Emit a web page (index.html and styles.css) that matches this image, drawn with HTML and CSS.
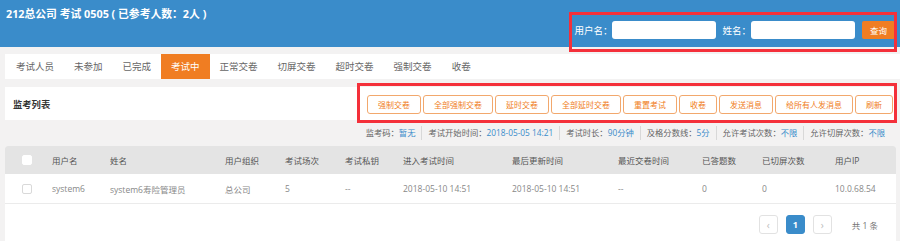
FILE: index.html
```html
<!DOCTYPE html>
<html lang="zh">
<head>
<meta charset="utf-8">
<title>监考列表</title>
<link rel="stylesheet" href="styles.css">
</head>
<body>
<div class="page">
  <header class="header">
    <div class="title">212总公司 考试 0505 ( 已参考人数：2人 )</div>
    <form class="search">
      <label class="lbl">用户名：</label>
      <input class="inp" type="text">
      <label class="lbl lbl2">姓名：</label>
      <input class="inp" type="text">
      <button type="button" class="btn-query">查询</button>
    </form>
  </header>

  <nav class="tabs">
    <span class="tab">考试人员</span>
    <span class="tab">未参加</span>
    <span class="tab">已完成</span>
    <span class="tab active">考试中</span>
    <span class="tab">正常交卷</span>
    <span class="tab">切屏交卷</span>
    <span class="tab">超时交卷</span>
    <span class="tab">强制交卷</span>
    <span class="tab">收卷</span>
  </nav>

  <section class="panel">
    <div class="panel-title">监考列表</div>
    <div class="actions">
      <button type="button" class="act">强制交卷</button>
      <button type="button" class="act">全部强制交卷</button>
      <button type="button" class="act">延时交卷</button>
      <button type="button" class="act">全部延时交卷</button>
      <button type="button" class="act">重置考试</button>
      <button type="button" class="act">收卷</button>
      <button type="button" class="act">发送消息</button>
      <button type="button" class="act">给所有人发消息</button>
      <button type="button" class="act">刷新</button>
    </div>
  </section>

  <div class="meta">
    <span class="mi">监考码：<b>暂无</b></span>
    <span class="mi">考试开始时间：<b>2018-05-05 14:21</b></span>
    <span class="mi">考试时长：<b>90分钟</b></span>
    <span class="mi">及格分数线：<b>5分</b></span>
    <span class="mi">允许考试次数：<b>不限</b></span>
    <span class="mi">允许切屏次数：<b>不限</b></span>
  </div>

  <div class="table">
    <div class="tr thead">
      <div class="td"><span class="cb"></span></div>
      <div class="td">用户名</div>
      <div class="td">姓名</div>
      <div class="td">用户组织</div>
      <div class="td">考试场次</div>
      <div class="td">考试私钥</div>
      <div class="td">进入考试时间</div>
      <div class="td">最后更新时间</div>
      <div class="td">最近交卷时间</div>
      <div class="td">已答题数</div>
      <div class="td">已切屏次数</div>
      <div class="td">用户IP</div>
    </div>
    <div class="tr trow">
      <div class="td"><span class="cb"></span></div>
      <div class="td">system6</div>
      <div class="td">system6寿险管理员</div>
      <div class="td">总公司</div>
      <div class="td">5</div>
      <div class="td">--</div>
      <div class="td">2018-05-10 14:51</div>
      <div class="td">2018-05-10 14:51</div>
      <div class="td">--</div>
      <div class="td">0</div>
      <div class="td">0</div>
      <div class="td">10.0.68.54</div>
    </div>
    <div class="pager">
      <span class="pg">&lsaquo;</span>
      <span class="pg cur">1</span>
      <span class="pg">&rsaquo;</span>
      <span class="total">共 1 条</span>
    </div>
  </div>

  <div class="mark mark-search"></div>
  <div class="mark mark-actions"></div>
</div>
</body>
</html>
```

FILE: styles.css
```css
* { box-sizing: border-box; }
html, body { margin: 0; padding: 0; }
body {
  background: #f3f2f2;
  font-family: "Open Sans", "Noto Sans CJK SC", sans-serif;
  color: #555;
}
.page {
  position: relative;
  width: 900px;
  height: 241px;
  overflow: hidden;
}

/* header */
.header {
  height: 47px;
  background: #3a8cca;
  display: flex;
  justify-content: space-between;
  align-items: flex-start;
}
.title {
  color: #fff;
  font-weight: bold;
  font-size: 10.8px;
  line-height: 14px;
  padding: 7px 0 0 6px;
}
.search {
  margin: 21px 5px 0 0;
  display: flex;
  align-items: center;
  height: 18px;
}
.lbl {
  color: #fff;
  font-family: "Noto Sans CJK SC", sans-serif;
  font-size: 9.5px;
  margin-right: 0;
}
.lbl2 { margin-left: 6px; }
.inp {
  width: 104px;
  height: 18px;
  border: none;
  border-radius: 3px;
  background: #fff;
  padding: 0;
  margin: 0;
  outline: none;
}
.btn-query {
  margin-left: 7px;
  width: 33px;
  height: 18px;
  border: none;
  border-radius: 2px;
  background: #f07d22;
  color: #fff;
  font-family: inherit;
  font-size: 8.5px;
  padding: 0;
}

/* tabs */
.tabs {
  margin: 7px 0 0 5px;
  height: 25px;
  background: #fff;
  display: flex;
  padding-left: 1px;
}
.tab {
  font-size: 9.5px;
  line-height: 25px;
  padding: 0 10px;
  color: #666;
  white-space: nowrap;
}
.tab.active {
  background: #f07d22;
  color: #fff;
}

/* panel */
.panel {
  margin: 8px 4px 0 5px;
  height: 33px;
  background: #fff;
  display: flex;
  align-items: center;
  justify-content: space-between;
  padding: 0 3px 0 8px;
}
.panel-title {
  font-size: 9.3px;
  font-weight: bold;
  color: #333;
}
.actions {
  display: flex;
  gap: 2px;
  margin-top: 1px;
}
.act {
  height: 19px;
  padding: 0 10px;
  border: 1px solid #f2a86d;
  border-radius: 3px;
  background: #fff;
  color: #f07d22;
  font-family: inherit;
  font-size: 8px;
  line-height: 17px;
  white-space: nowrap;
}

/* meta line */
.meta {
  height: 26px;
  display: flex;
  justify-content: flex-end;
  align-items: center;
  padding-right: 15px;
  font-size: 8.3px;
  color: #666;
}
.mi {
  padding: 0 6px;
  border-left: 1px solid #d8d8d8;
  line-height: 14px;
  white-space: nowrap;
}
.mi:first-child { border-left: none; }
.mi:last-child { padding-right: 0; }
.mi b { font-weight: normal; color: #3a8cca; }

/* table */
.table {
  margin: 0 4px 0 5px;
  background: #fff;
  height: 95px;
  border-radius: 3px 3px 0 0;
}
.tr {
  display: grid;
  grid-template-columns: 47px 58px 115px 60px 60px 58px 109px 106px 84px 60px 73px 1fr;
  align-items: center;
  font-size: 8.5px;
  white-space: nowrap;
}
.thead {
  height: 28px;
  background: #e4e4e4;
  color: #555;
  border-radius: 3px 3px 0 0;
}
.trow {
  height: 30px;
  color: #888;
  border-bottom: 1px solid #ebebeb;
}
.td:first-child { padding-left: 17px; display: flex; }
.cb {
  width: 10px;
  height: 10px;
  background: #fff;
  border: 1px solid #d9d9d9;
  border-radius: 2px;
}
.thead .cb { border-color: #fff; }

/* pager */
.pager {
  display: flex;
  justify-content: flex-end;
  align-items: center;
  padding: 11px 18px 0 0;
  gap: 8px;
}
.pg {
  width: 19px;
  height: 19px;
  border: 1px solid #e2e2e2;
  border-radius: 3px;
  display: flex;
  align-items: center;
  justify-content: center;
  font-size: 10px;
  color: #bbb;
}
.pg.cur {
  background: #3a8cca;
  border-color: #3a8cca;
  color: #fff;
  font-weight: bold;
  font-size: 9px;
}
.total {
  margin-left: 12px;
  font-size: 8.5px;
  color: #777;
}

/* red annotation boxes */
.mark {
  position: absolute;
  border: 3px solid #f4303a;
  pointer-events: none;
}
.mark-search { left: 569px; top: 12px; width: 328px; height: 40px; }
.mark-actions { left: 357px; top: 83px; width: 540px; height: 40px; }
```
